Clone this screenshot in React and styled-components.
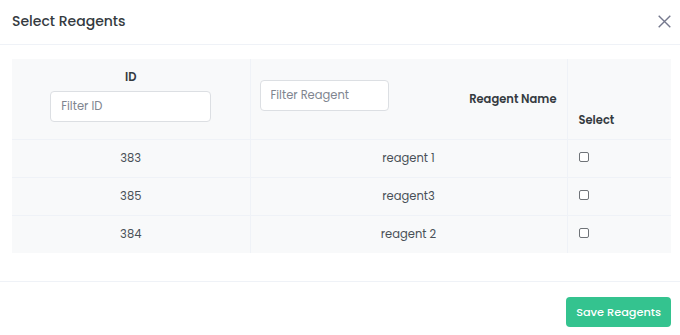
import styled, { createGlobalStyle } from 'styled-components'

const GlobalStyle = createGlobalStyle`
  html, body {
    margin: 0;
    padding: 0;
    background: #ffffff;
  }
  body {
    font-family: "Poppins", "Open Sans", "Liberation Sans", sans-serif;
    font-size: 11.5px;
    color: #495057;
  }
`

const Modal = styled.div`
  width: 680px;
  height: 335px;
  background: #fff;
  display: flex;
  flex-direction: column;
  overflow: hidden;
`

const Header = styled.div`
  height: 45px;
  box-sizing: border-box;
  display: flex;
  align-items: center;
  justify-content: space-between;
  padding: 0 9px 2px 12px;
  border-bottom: 1px solid #eff2f7;
`

const Title = styled.h5`
  margin: 0;
  font-size: 14px;
  font-weight: 500;
  color: #343a40;
`

const CloseBtn = styled.button`
  border: none;
  background: none;
  padding: 0;
  width: 14px;
  height: 14px;
  display: flex;
  align-items: center;
  justify-content: center;
  cursor: pointer;
  color: #74788d;
`

const Body = styled.div`
  padding: 14px 9px 28px 12px;
  border-bottom: 1px solid #eff2f7;
`

const Table = styled.table`
  width: 100%;
  border-collapse: collapse;
  background: #f8f9fa;
  table-layout: fixed;
`

const HeadCell = styled.th`
  height: 80px;
  box-sizing: border-box;
  border-right: 1px solid #eff2f7;
  border-bottom: 1px solid #eff2f7;
  font-size: 11.5px;
  font-weight: 600;
  color: #343a40;
  vertical-align: ${p => p.$align || 'top'};
  text-align: ${p => p.$text || 'center'};
  padding: ${p => p.$pad || '8px 10px 0'};
  line-height: 20px;

  &:last-child {
    border-right: none;
  }
`

const HeadFlex = styled.div`
  display: flex;
  justify-content: space-between;
  align-items: flex-start;
`

const HeadLabel = styled.span`
  margin-top: ${p => p.$top || 0}px;
  white-space: nowrap;
`

const FilterInput = styled.input`
  display: block;
  box-sizing: border-box;
  width: ${p => p.$w}px;
  height: ${p => p.$h}px;
  margin: ${p => p.$margin || 0};
  border: 1px solid #dcdfe3;
  border-radius: 4px;
  background: #fff;
  padding: 0 10px;
  font-family: inherit;
  font-size: 11.5px;
  font-weight: 400;
  color: #495057;
  outline: none;

  &::placeholder {
    color: #80858f;
  }
`

const Row = styled.tr`
  height: 38px;
`

const Cell = styled.td`
  box-sizing: border-box;
  border-right: 1px solid #eff2f7;
  border-bottom: 1px solid #eff2f7;
  text-align: ${p => p.$text || 'center'};
  vertical-align: ${p => p.$align || 'middle'};
  padding: ${p => p.$pad || '0 10px'};
  font-size: 11.5px;
  color: #495057;

  &:last-child {
    border-right: none;
  }

  tr:last-child > & {
    border-bottom: none;
  }
`

const Check = styled.input.attrs({ type: 'checkbox' })`
  appearance: none;
  display: block;
  margin: 0;
  width: 10px;
  height: 10px;
  border: 1px solid #6f7378;
  border-radius: 2px;
  background: #fff;
`

const Footer = styled.div`
  display: flex;
  justify-content: flex-end;
  padding: 15px 9px 0 12px;
`

const SaveBtn = styled.button`
  height: 30px;
  padding: 0 10px;
  border: none;
  border-radius: 4px;
  background: #34c38f;
  color: #fff;
  font-family: inherit;
  font-size: 11.3px;
  font-weight: 500;
  cursor: pointer;
`

const rows = [
  { id: 383, name: 'reagent 1' },
  { id: 385, name: 'reagent3' },
  { id: 384, name: 'reagent 2' },
]

const App = () => {
  return (
    <>
      <GlobalStyle />
      <Modal>
        <Header>
          <Title>Select Reagents</Title>
          <CloseBtn aria-label="Close">
            <svg width="13" height="13" viewBox="0 0 13 13">
              <path d="M0.7 0.7 L12.3 12.3 M12.3 0.7 L0.7 12.3" stroke="currentColor" strokeWidth="1.4" fill="none" />
            </svg>
          </CloseBtn>
        </Header>
        <Body>
          <Table>
            <colgroup>
              <col style={{ width: '238px' }} />
              <col style={{ width: '317px' }} />
              <col />
            </colgroup>
            <thead>
              <tr>
                <HeadCell>
                  ID
                  <FilterInput $w={161} $h={31} $margin="4px auto 0" placeholder="Filter ID" />
                </HeadCell>
                <HeadCell $pad="21px 10px 0 9px">
                  <HeadFlex>
                    <FilterInput $w={129} $h={31} placeholder="Filter Reagent" />
                    <HeadLabel $top={9}>Reagent Name</HeadLabel>
                  </HeadFlex>
                </HeadCell>
                <HeadCell $align="bottom" $text="left" $pad="0 10px 9px 11px">
                  Select
                </HeadCell>
              </tr>
            </thead>
            <tbody>
              {rows.map(r => (
                <Row key={r.id}>
                  <Cell>{r.id}</Cell>
                  <Cell>{r.name}</Cell>
                  <Cell $text="left" $align="top" $pad="12px 10px 0 11px">
                    <Check />
                  </Cell>
                </Row>
              ))}
            </tbody>
          </Table>
        </Body>
        <Footer>
          <SaveBtn>Save Reagents</SaveBtn>
        </Footer>
      </Modal>
    </>
  )
}

export default App
